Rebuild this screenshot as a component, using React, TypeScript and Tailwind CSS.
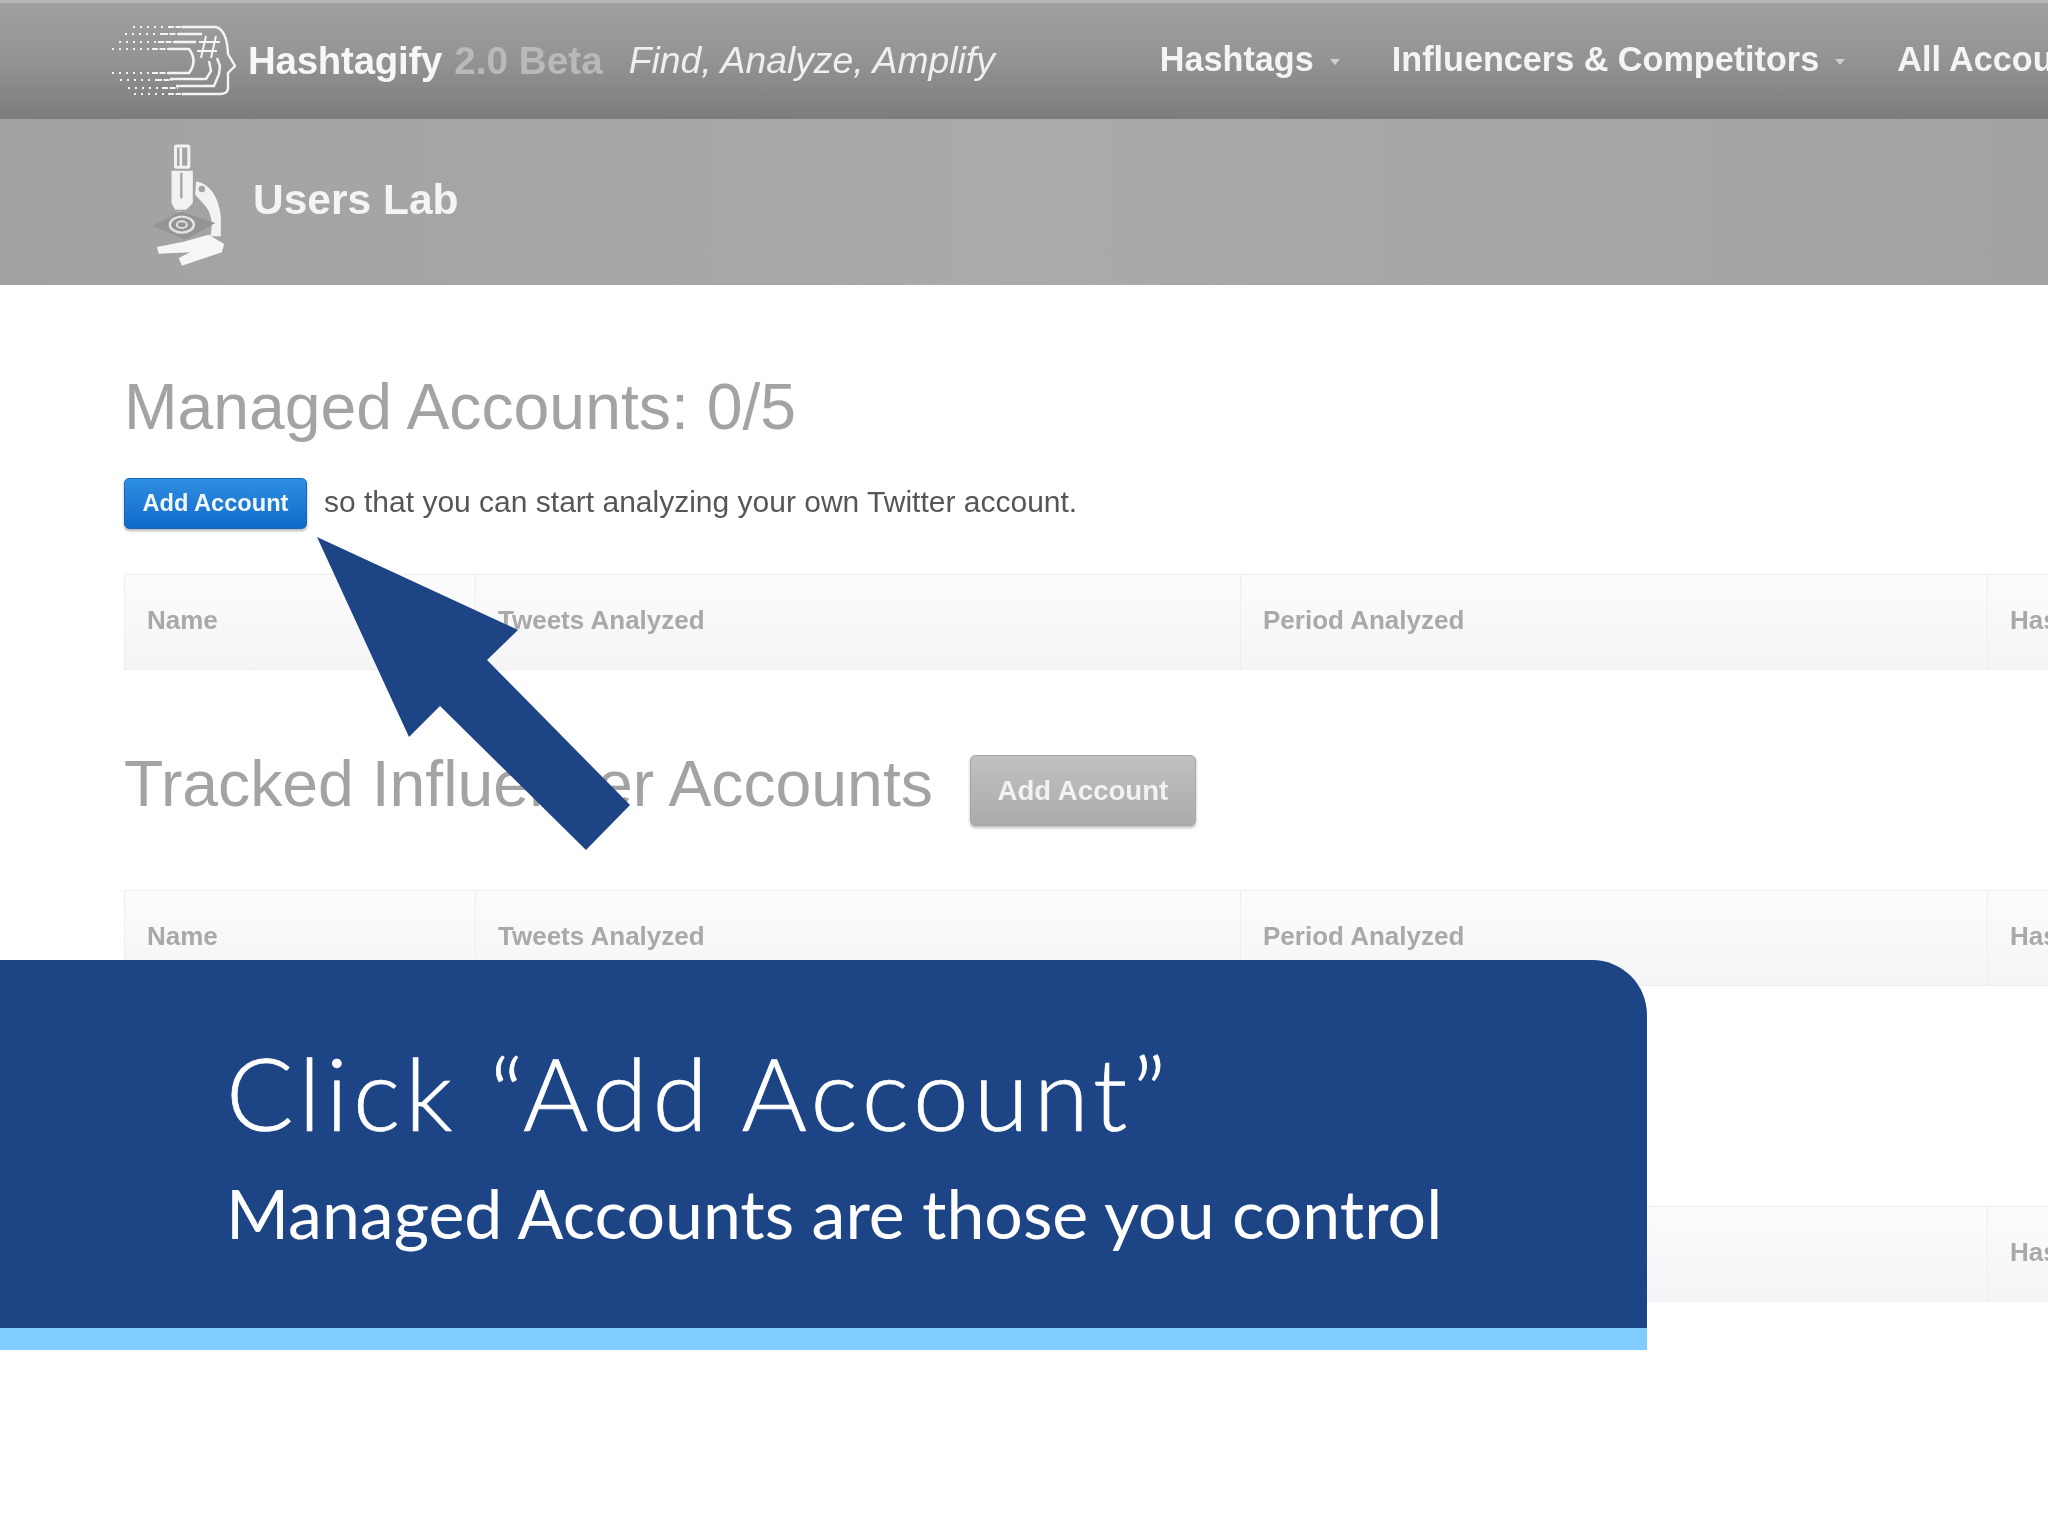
const columns = [
  { label: "Name", width: "w-[351px]" },
  { label: "Tweets Analyzed", width: "w-[765px]" },
  { label: "Period Analyzed", width: "w-[747px]" },
  { label: "Hashtags", width: "flex-1" },
];

function HeadLogo() {
  const rows = [
    { y: 1, x: 21, stop: 72 },
    { y: 8, x: 13, stop: 66 },
    { y: 16, x: 7, stop: 62 },
    { y: 23, x: 0, stop: 56 },
    { y: 47, x: 0, stop: 56 },
    { y: 54, x: 8, stop: 60 },
    { y: 62, x: 16, stop: 66 },
    { y: 68, x: 22, stop: 72 },
  ];
  return (
    <svg width="124" height="76" viewBox="0 -3 124 76" fill="none" stroke="#f4f4f4" className="shrink-0">
      {rows.map((r) => (
        <g key={r.y}>
          <line x1={r.x} y1={r.y} x2={r.stop - 16} y2={r.y} strokeWidth="2.2" strokeDasharray="2 5" />
          <line x1={r.stop - 16} y1={r.y} x2={r.stop} y2={r.y} strokeWidth="2.2" strokeDasharray="6 1.5" />
        </g>
      ))}
      <path d="M70 1H104Q115 4 116 28L123 40L116 47V63Q115 68 108 68H70" strokeWidth="2.4" />
      <path d="M66 8H90M105 32L108 40L107 48L102 60H64" strokeWidth="2.4" />
      <path d="M62 16H84M97 35L99 45L94 53H58" strokeWidth="2.4" />
      <path d="M56 23H77Q86 35 77 47H56" strokeWidth="2.6" />
      <path d="M94 10L89 32M104 10L99 32M87 16H108M85 25H105" strokeWidth="2" />
    </svg>
  );
}

function Microscope() {
  return (
    <svg width="77" height="125" viewBox="150 400 230 375" className="shrink-0">
      <rect x="226" y="409" width="40" height="64" rx="3" fill="none" stroke="#f2f2f2" strokeWidth="9" />
      <rect x="238" y="414" width="8" height="56" fill="#f2f2f2" />
      <path d="M214 483H278V580L258 600H225L214 580Z" fill="#f2f2f2" />
      <rect x="240" y="490" width="7" height="76" fill="#a5a5a5" />
      <circle cx="240" cy="612" r="8" fill="#f2f2f2" />
      <path d="M288 515Q350 528 362 620V680H330Q345 620 310 582L285 555Z" fill="#f2f2f2" />
      <circle cx="305" cy="538" r="10" fill="#a5a5a5" />
      <path d="M157 648L240 605L345 640L255 690Z" fill="#949494" />
      <ellipse cx="245" cy="645" rx="36" ry="24" fill="none" stroke="#e4e4e4" strokeWidth="7" />
      <ellipse cx="245" cy="645" rx="15" ry="10" fill="none" stroke="#e4e4e4" strokeWidth="6" />
      <path d="M170 712L250 696L325 675L372 703L365 728L245 768L236 745L270 728L176 732Z" fill="#f6f6f6" />
    </svg>
  );
}

function NavItem({ label, caret }: { label: string; caret?: boolean }) {
  return (
    <span className="flex items-center gap-[16px] whitespace-nowrap">
      {label}
      {caret && <span className="mt-1 h-0 w-0 border-x-[5px] border-t-[6px] border-x-transparent border-t-[#cfcfcf]" />}
    </span>
  );
}

function HeaderTable() {
  return (
    <div className="flex h-[96px] w-[1924px] border border-r-0 border-[#eeeeef] bg-gradient-to-b from-[#fdfcfd] to-[#f5f4f6] text-[26px] font-bold text-[#a9a9a9]">
      {columns.map((col, i) => (
        <div
          key={col.label}
          className={`flex items-center overflow-hidden whitespace-nowrap pb-1 pl-[22px] ${col.width} ${i < 3 ? "border-r border-[#eeeeef]" : ""}`}
        >
          {col.label}
        </div>
      ))}
    </div>
  );
}

export default function App() {
  return (
    <div className="relative h-[1536px] w-[2048px] overflow-hidden bg-white font-['Liberation_Sans',Arial,sans-serif]">
      <div className="blur-[0.7px]">
        <header className="flex h-[119px] items-center whitespace-nowrap border-t-[3px] border-[#b5b5b5] bg-gradient-to-b from-[#a0a0a0] via-[#939393] to-[#7c7c7c] pl-[112px] text-white">
          <HeadLogo />
          <span className="ml-[12px] text-[38.4px] font-bold tracking-[-0.2px] text-[#f7f7f7]">Hashtagify</span>
          <span className="ml-[12px] text-[38.7px] font-bold text-[#b9b9b9]">2.0 Beta</span>
          <span className="ml-[26px] text-[37.3px] italic text-[#efefef]">Find, Analyze, Amplify</span>
          <nav className="ml-[165px] flex shrink-0 gap-[52px] pb-[2px] text-[34.2px] font-bold text-[#f4f4f4]">
            <NavItem label="Hashtags" caret />
            <NavItem label="Influencers & Competitors" caret />
            <NavItem label="All Accounts" />
          </nav>
        </header>

        <section className="flex h-[166px] items-center bg-gradient-to-r from-[#a2a2a2] via-[#aaaaaa] to-[#a3a3a3] pl-[150px] pt-[6px]">
          <Microscope />
          <h1 className="ml-[26px] pb-[10px] text-[42.5px] font-bold text-[#f4f4f4]">Users Lab</h1>
        </section>

        <main className="pl-[124px]">
          <h2 className="mt-[84px] text-[64.3px] leading-[76px] text-[#a3a3a3]">Managed Accounts: 0/5</h2>
          <div className="mt-[33px] flex items-center gap-[17px]">
            <button className="h-[51px] w-[183px] rounded-[5px] border border-[#1766b8] bg-gradient-to-b from-[#2e8fe2] to-[#0f69c8] text-[23.6px] font-bold text-[#f2f7fc] shadow-[0_2px_3px_rgba(0,0,0,0.3)]">
              Add Account
            </button>
            <p className="pb-[4px] text-[30px] text-[#565656]">so that you can start analyzing your own Twitter account.</p>
          </div>
          <div className="mt-[45px]">
            <HeaderTable />
          </div>

          <div className="mt-[76px] flex items-start gap-[37px]">
            <h2 className="text-[64.3px] leading-[76px] text-[#a3a3a3]">Tracked Influencer Accounts</h2>
            <button className="mt-[9px] h-[71px] w-[226px] rounded-[5px] border border-[#a8a6a8] bg-gradient-to-b from-[#c2c0c2] to-[#acaaac] text-[27.6px] font-bold text-[#f2f2f2] shadow-[0_2px_3px_rgba(0,0,0,0.25)]">
              Add Account
            </button>
          </div>
          <div className="mt-[64px]">
            <HeaderTable />
          </div>
          <div className="mt-[220px]">
            <HeaderTable />
          </div>
        </main>
      </div>

      <svg className="absolute left-0 top-0" width="700" height="900" viewBox="0 0 700 900">
        <polygon points="317,537 518,630 487,660 630,805 586,850 440,706 409,737" fill="#1d4586" />
      </svg>

      <div className="absolute left-0 top-[960px] w-[1647px]">
        <div className="h-[368px] rounded-tr-[55px] bg-[#1d4586] pl-[226px] pt-[77px] text-white">
          <p className="font-['Lato',sans-serif] text-[100px] font-light leading-[110px] tracking-[5px] [-webkit-text-stroke:0.7px_white]">Click “Add Account”</p>
          <p className="mt-[26px] font-['Lato',sans-serif] text-[68px] leading-[80px]">Managed Accounts are those you control</p>
        </div>
        <div className="h-[22px] bg-[#80ccff]" />
      </div>
    </div>
  );
}
